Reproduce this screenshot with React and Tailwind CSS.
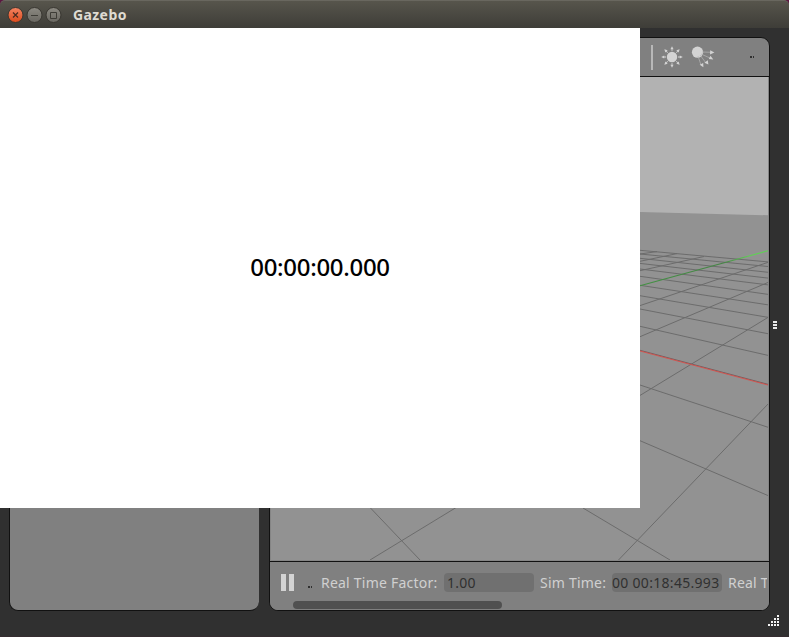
import React from "react";

const gridLines = [
  [640, 250.3, 769, 262], [640, 254, 769, 266.6], [640, 258.3, 769, 272.4],
  [640, 263.4, 769, 278.2], [640, 269, 769, 285], [640, 276.3, 769, 294.5],
  [640, 285.3, 769, 305], [640, 295.7, 769, 317.5], [640, 309, 769, 333.9],
  [640, 326.3, 769, 355.6], [640, 385, 769, 427.6], [640, 440.7, 769, 496],
  [583, 508, 670, 560], [370.5, 508, 420, 560],
  [370, 560, 769, 316.8], [618.5, 560, 769, 403], [640, 336.7, 769, 282],
  [640, 305.6, 769, 262], [640, 270.7, 704, 256.5], [640, 261.3, 677, 253.6],
  [640, 254, 657, 251.6],
];

function Scene() {
  return (
    <svg className="block h-full w-full" viewBox="270 77 499 484" preserveAspectRatio="none">
      <defs>
        <linearGradient id="axis" x1="0" x2="1">
          <stop offset="0" stopColor="#429142" />
          <stop offset="0.65" stopColor="#468446" />
          <stop offset="0.85" stopColor="#60cf55" />
          <stop offset="1" stopColor="#60cf55" />
        </linearGradient>
      </defs>
      <rect x="270" y="77" width="499" height="484" fill="#b2b2b2" />
      <path d="M270 203L640 212L769 215.3V561H270Z" fill="#929292" />
      <g stroke="#6c6c6c" strokeWidth="1">
        {gridLines.map(([x1, y1, x2, y2], i) => (
          <line key={i} x1={x1} y1={y1} x2={x2} y2={y2} />
        ))}
      </g>
      <path d="M640 285.7L769 250.5" stroke="url(#axis)" strokeWidth="1.1" />
      <path d="M640 350.3L769 384.6" stroke="#755e5e" strokeWidth="1" />
      <path d="M640 351L769 385.3" stroke="#d94f4b" strokeWidth="0.9" />
      <path d="M270.5 77V560.5H768.5V77" fill="none" stroke="#858585" />
    </svg>
  );
}

function PointLight() {
  return (
    <svg className="h-[22px] w-[22px] shrink-0" viewBox="-11 -11 22 22" fill="#d3d3d3">
      <circle r="5.2" />
      {[0, 45, 90, 135, 180, 225, 270, 315].map((a) => (
        <path key={a} transform={`rotate(${a})`} d="M6 -.4H7.8V-1.6L10.8 0L7.8 1.6V.4H6Z" />
      ))}
    </svg>
  );
}

function SpotLight() {
  return (
    <svg className="ml-2 h-6 w-6 shrink-0" viewBox="0 0 24 24" fill="#d3d3d3">
      <circle cx="6.5" cy="7.2" r="5.6" />
      <g stroke="#b4b4b4" strokeWidth=".7">
        <path d="M11 7L20 7.3M10 9L19 13M9 10L15 18M7 11L10 20" />
      </g>
      <path d="M19.2 5.2L23.4 7.4L19 9.4ZM19.5 10.8L22.3 14.6L17.8 14ZM16.8 15.2L17.4 19.6L13.4 17.7ZM12.2 18L12.4 22.3L8.7 19.8Z" />
    </svg>
  );
}

function TitleBar() {
  return (
    <div className="relative h-7 shrink-0 bg-[#5b1740]">
      <header className="flex h-7 items-center rounded-t-[5px] border-t border-[#69675f] bg-linear-to-b from-[#57554c] to-[#3e3d38] pl-[7px]">
        <svg className="h-4 w-[55px] shrink-0" viewBox="0 0 55 16" fill="none">
          <defs>
            <linearGradient id="close" x2="0" y2="1">
              <stop stopColor="#f58462" /><stop offset="1" stopColor="#dc4a1b" />
            </linearGradient>
            <linearGradient id="gray" x2="0" y2="1">
              <stop stopColor="#8c8a82" /><stop offset="1" stopColor="#686660" />
            </linearGradient>
          </defs>
          <circle cx="8.5" cy="8" r="7.5" fill="url(#close)" stroke="#383630" />
          <circle cx="27.5" cy="8" r="7.5" fill="url(#gray)" stroke="#383630" />
          <circle cx="46.5" cy="8" r="7.5" fill="url(#gray)" stroke="#383630" />
          <path d="M6 5.5L11 10.5M11 5.5L6 10.5" stroke="#4b2b20" strokeWidth="1.2" />
          <path d="M24 8.5H31M43.5 5.5H49.5V11.5H43.5Z" stroke="#3d3c36" />
        </svg>
        <h1 className="ml-[11px] font-['Noto_Sans',sans-serif] text-[14px] leading-5 font-bold tracking-[0.4px] text-[#dfdbd2]">Gazebo</h1>
      </header>
    </div>
  );
}

function StatusBar() {
  return (
    <footer className="h-[48px] shrink-0 overflow-hidden bg-[#808080]">
      <div className="flex h-[41px] items-center pl-[11px] text-[14px] tracking-[0.22px] whitespace-nowrap text-[#d0d0d0]">
        <div className="flex h-[17px] w-[13px] shrink-0 justify-between">
          <i className="w-[5px] bg-[#d3d3d3]" />
          <i className="w-[5px] bg-[#d3d3d3]" />
        </div>
        <span className="mt-2 ml-[14px] flex h-0.5 w-1 shrink-0 gap-px">
          <i className="w-[1.5px] bg-[#303030]" /><i className="w-[1.5px] bg-[#303030]" />
        </span>
        <span className="ml-[9px] w-[123px] shrink-0">Real Time Factor:</span>
        <span className="flex h-[19px] w-[90px] shrink-0 items-center rounded bg-[#707070] pl-[3px] text-[#303030]">1.00</span>
        <span className="ml-[6px] w-[72px] shrink-0">Sim Time:</span>
        <span className="flex h-[19px] w-[110px] shrink-0 items-center overflow-hidden rounded bg-[#707070] tracking-[0.3px] text-[#303030]">00 00:18:45.993</span>
        <span className="ml-[6px] w-[39px] shrink-0 overflow-hidden">Real T</span>
      </div>
      <div className="-mt-0.5 ml-[23px] h-2 w-[209px] rounded-full bg-[#505050]" />
    </footer>
  );
}

export default function App() {
  return (
    <div className="relative flex h-[637px] w-[789px] flex-col overflow-hidden bg-[#303030] font-['Noto_Sans',sans-serif]">
      <TitleBar />
      <main className="flex h-[583px] shrink-0 pt-[9px] pl-[9px]">
        <aside className="w-[250px] shrink-0 rounded-[9px] border-b border-l border-[#111] bg-[#808080]" />
        <section className="ml-[10px] flex w-[501px] shrink-0 flex-col overflow-hidden rounded-[9px] border border-[#111] bg-[#808080]">
          <div className="flex h-[39px] shrink-0 items-center justify-end border-b border-[#111] pr-[15px]">
            <i className="mr-[8px] h-[25px] w-0.5 bg-[#b8b8b8]" />
            <PointLight />
            <SpotLight />
            <span className="ml-[35px] flex h-0.5 w-1 shrink-0 gap-px">
              <i className="w-[1.5px] bg-[#303030]" /><i className="w-[1.5px] bg-[#303030]" />
            </span>
          </div>
          <div className="h-[485px] shrink-0 border-b border-[#111]"><Scene /></div>
          <StatusBar />
        </section>
        <div className="ml-[3px] flex flex-col justify-center gap-px pt-px">
          <i className="h-0.5 w-1 bg-[#e8e8e8]" />
          <i className="h-0.5 w-1 bg-[#e8e8e8]" />
          <i className="h-0.5 w-1 bg-[#e8e8e8]" />
        </div>
      </main>
      <div className="flex h-[26px] shrink-0 justify-end border-b border-[#352c30] pt-1 pr-[10px]">
        <svg className="h-[11px] w-[11px]" viewBox="0 0 11 11" fill="#f4f4f4">
          {[[9, 0], [6, 3], [9, 3], [3, 6], [6, 6], [9, 6], [0, 9], [3, 9], [6, 9], [9, 9]].map(([x, y]) => (
            <rect key={`${x}-${y}`} x={x} y={y} width="2" height="2" />
          ))}
        </svg>
      </div>
      <div className="absolute top-7 left-0 flex h-[480px] w-[640px] items-center justify-center bg-white pb-[3px] text-[24px] font-medium tracking-[-0.3px] text-black">
        00:00:00.000
      </div>
    </div>
  );
}
